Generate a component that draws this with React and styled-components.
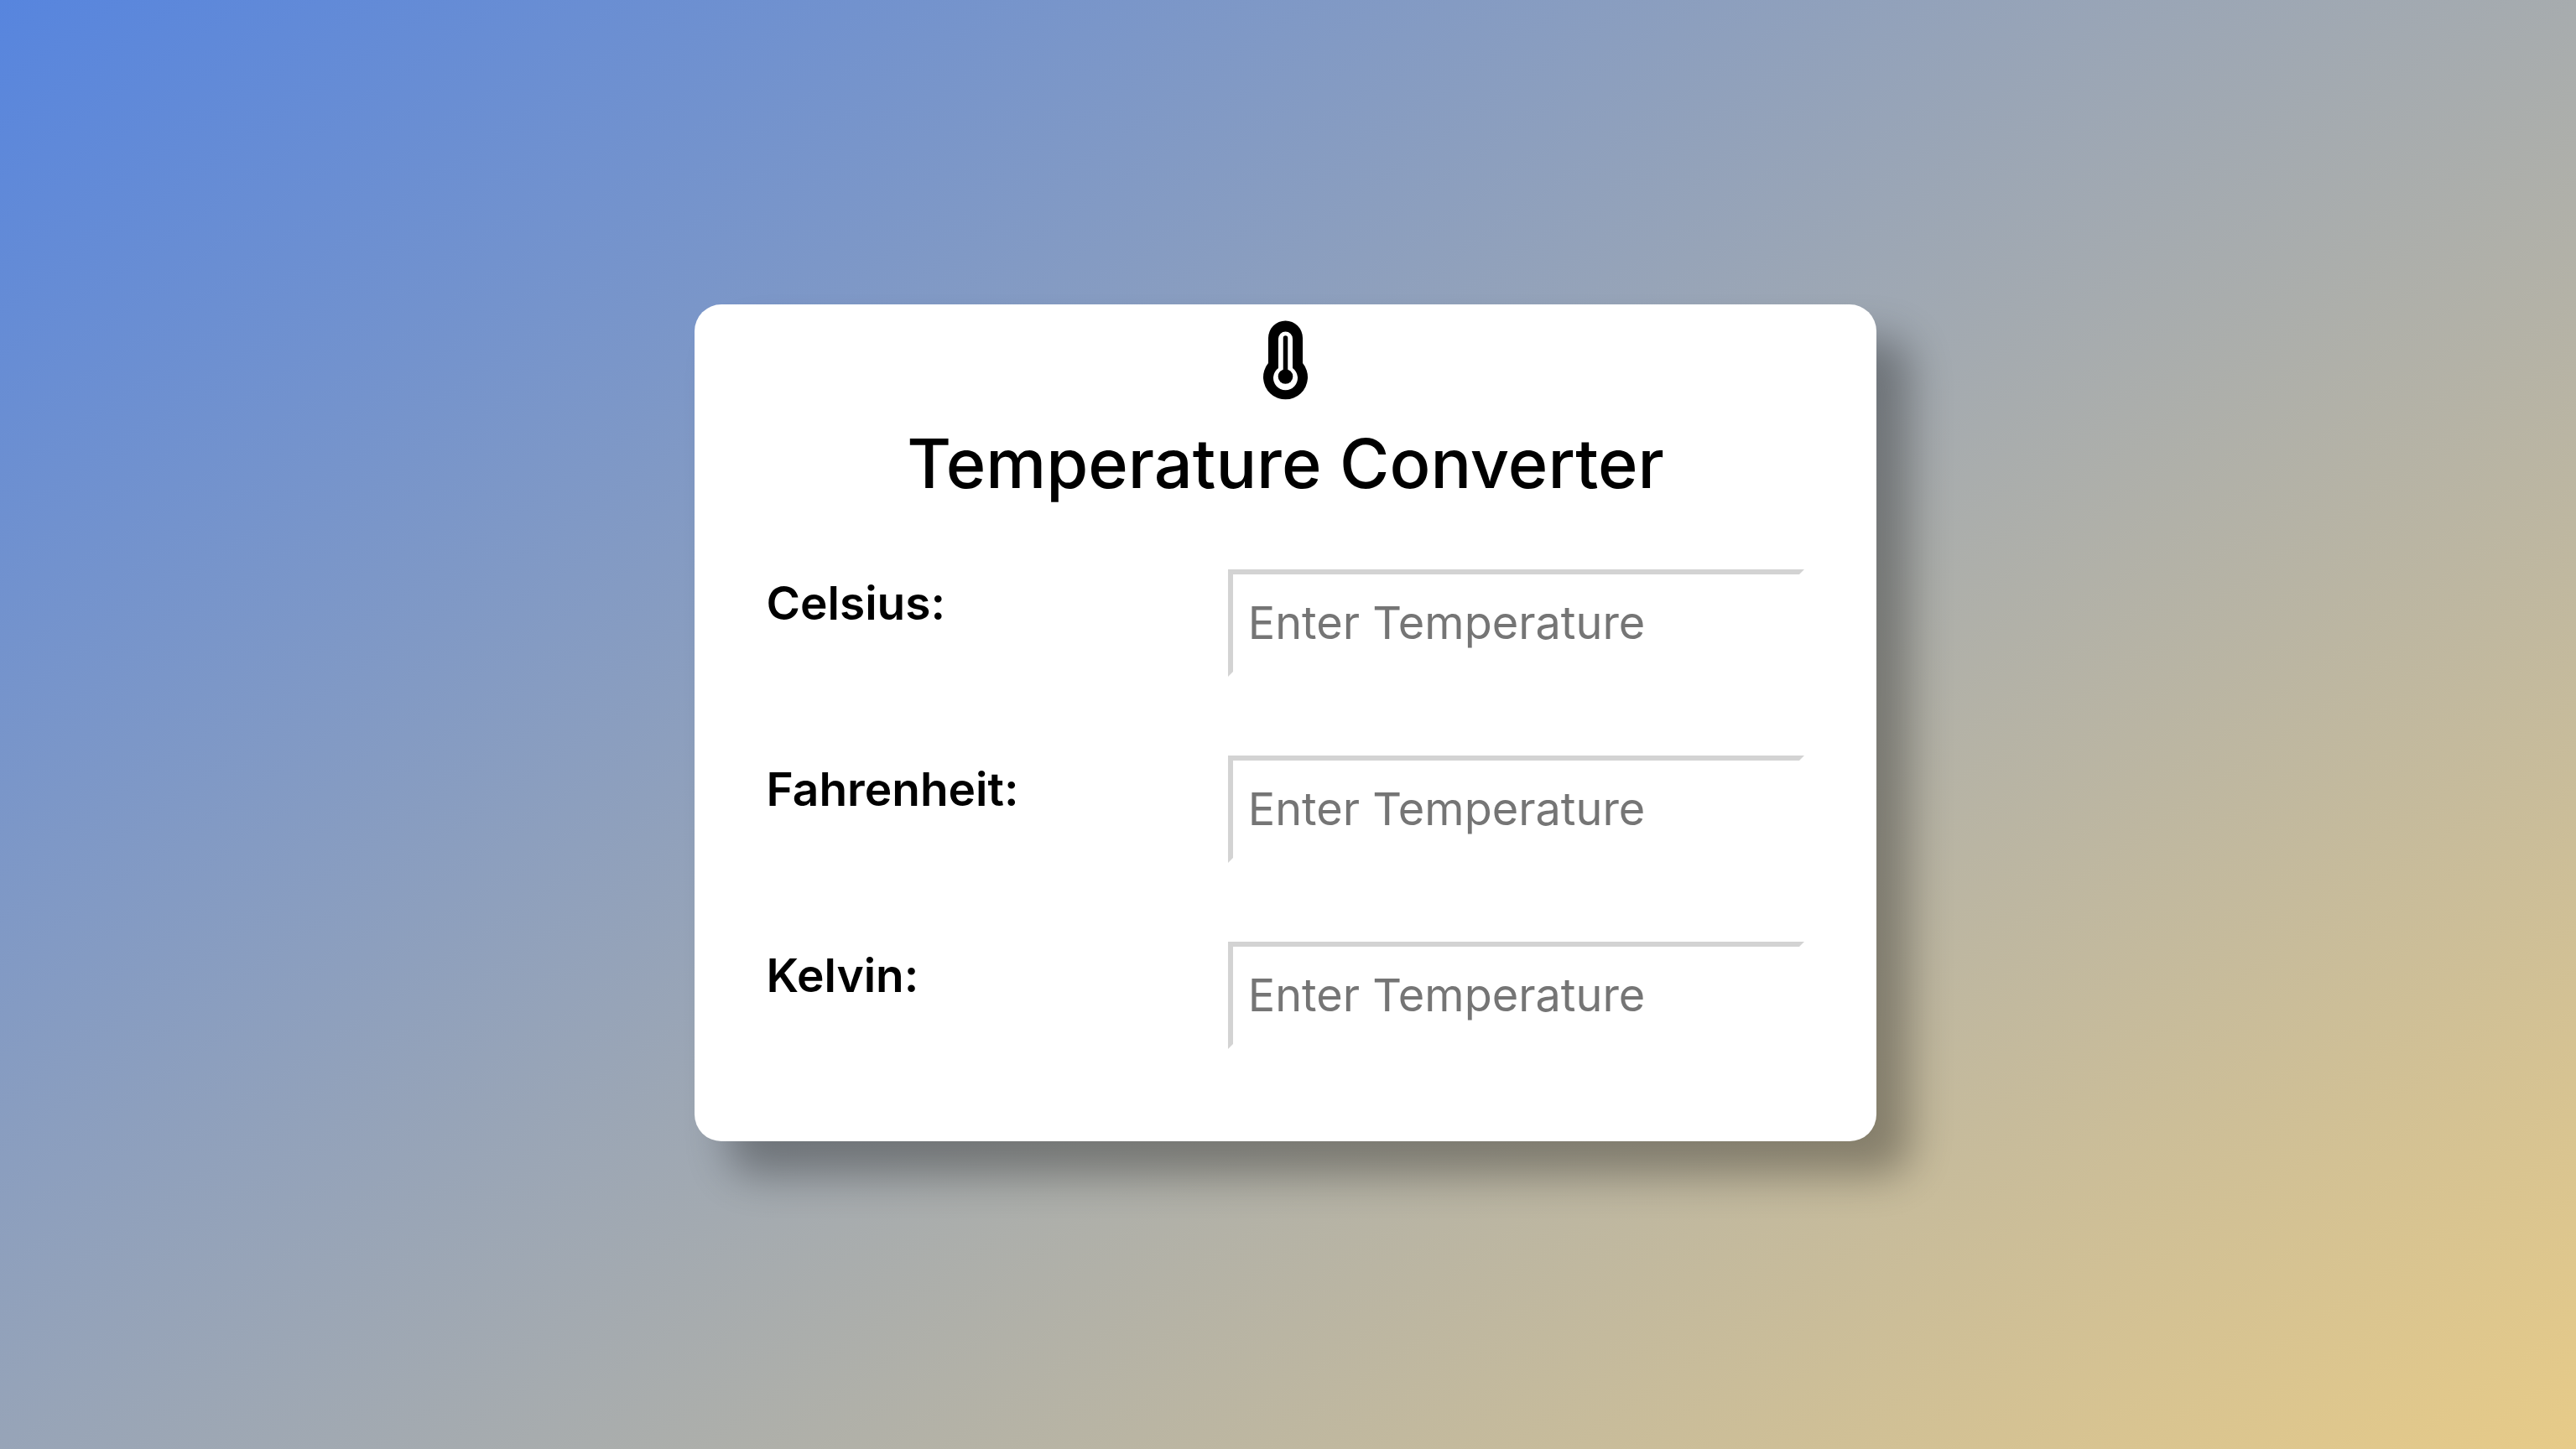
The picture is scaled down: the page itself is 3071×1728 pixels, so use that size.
import React, { useState } from "react";
import styled, { createGlobalStyle } from "styled-components";

const GlobalStyle = createGlobalStyle`
  * { box-sizing: border-box; }
  body {
    margin: 0;
    font-family: Inter, "Liberation Sans", sans-serif;
    color: #000;
  }
`;

const Page = styled.main`
  min-height: 100vh;
  display: flex;
  align-items: center;
  justify-content: center;
  padding-bottom: 4px;
  padding-right: 6px;
  background: linear-gradient(145deg, #5785de, #e7cb88);
`;

const Card = styled.section`
  width: 46%;
  min-width: 1000px;
  padding: 18px 86px 110px;
  display: flex;
  flex-direction: column;
  background: #fff;
  border-radius: 32px;
  box-shadow: 40px 40px 50px rgba(0, 0, 0, 0.32);
`;

const Thermometer = styled.svg`
  width: 56px;
  height: 96px;
  align-self: center;
`;

const Title = styled.h1`
  margin: 20px 0 70px;
  font-size: 81px;
  line-height: 112px;
  font-weight: 500;
  text-align: center;
`;

const Form = styled.form`
  display: flex;
  flex-direction: column;
  gap: 94px;
`;

const Row = styled.div`
  display: grid;
  grid-template-columns: 4fr 5fr;
  align-items: start;
`;

const Label = styled.label`
  padding-top: 8px;
  font-size: 55px;
  line-height: 64px;
  font-weight: 600;
`;

const Field = styled.input`
  width: 100%;
  height: 128px;
  padding: 0 18px 2px;
  border: 6px solid;
  border-color: #d3d3d3 #fff #fff #d3d3d3;
  background: #fff;
  font: inherit;
  font-size: 54px;
  outline: none;

  &::placeholder {
    color: #757575;
    opacity: 1;
  }
`;

const SCALES = [
  { id: "celsius", label: "Celsius:", toC: (v) => v, fromC: (c) => c },
  {
    id: "fahrenheit",
    label: "Fahrenheit:",
    toC: (v) => ((v - 32) * 5) / 9,
    fromC: (c) => (c * 9) / 5 + 32,
  },
  {
    id: "kelvin",
    label: "Kelvin:",
    toC: (v) => v - 273.15,
    fromC: (c) => c + 273.15,
  },
];

export default function App() {
  const [values, setValues] = useState({ celsius: "", fahrenheit: "", kelvin: "" });

  const update = (scale, text) => {
    const next = {};
    const number = parseFloat(text);
    SCALES.forEach((s) => {
      next[s.id] = Number.isNaN(number)
        ? ""
        : String(Number(s.fromC(scale.toC(number)).toFixed(2)));
    });
    next[scale.id] = text;
    setValues(next);
  };

  return (
    <Page>
      <GlobalStyle />
      <Card>
        <Thermometer viewBox="0 0 56 96" aria-hidden="true">
          <path d="M8 22a20 20 0 0 1 41 0v30a26.5 26.5 0 1 1-41 0z" />
          <path
            d="M20 23a8.5 8.5 0 0 1 17 0v35a14.5 14.5 0 1 1-17 0z"
            fill="#fff"
          />
          <path d="M28.5 22v46" stroke="#000" strokeWidth="5.5" strokeLinecap="round" />
          <circle cx="28.5" cy="68" r="8.8" />
        </Thermometer>
        <Title>Temperature Converter</Title>
        <Form>
          {SCALES.map((scale) => (
            <Row key={scale.id}>
              <Label htmlFor={scale.id}>{scale.label}</Label>
              <Field
                id={scale.id}
                type="text"
                placeholder="Enter Temperature"
                value={values[scale.id]}
                onChange={(event) => update(scale, event.target.value)}
              />
            </Row>
          ))}
        </Form>
      </Card>
    </Page>
  );
}
